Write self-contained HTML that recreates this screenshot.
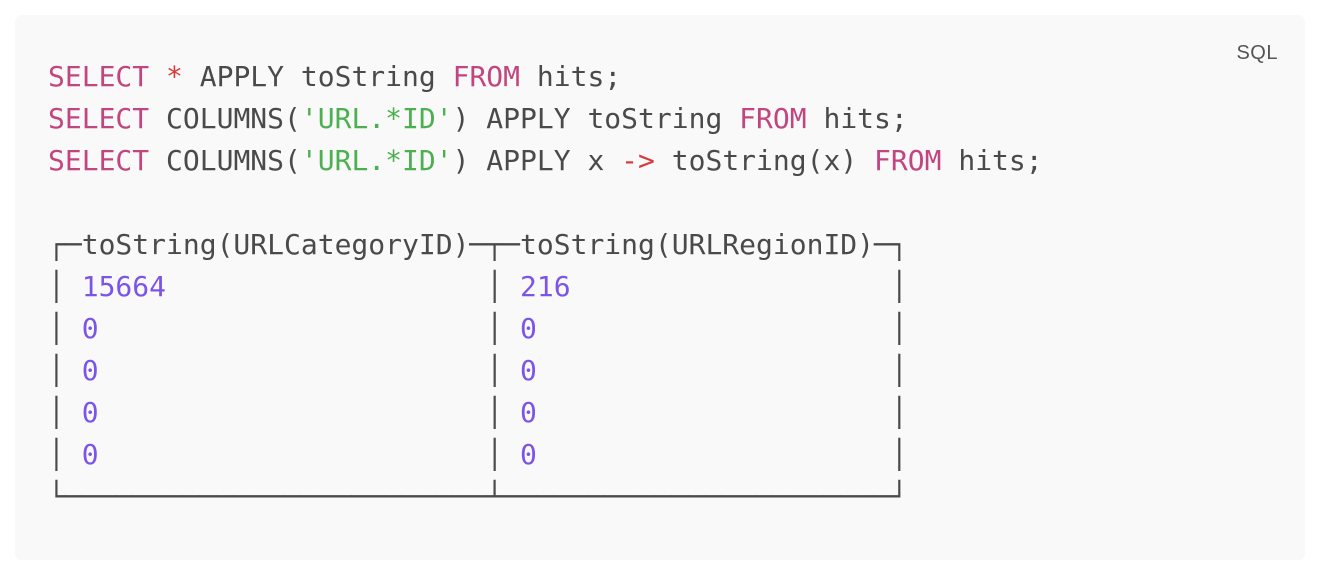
<!DOCTYPE html>
<html><head><meta charset="utf-8"><style>
html,body{margin:0;padding:0;background:#fff;width:1324px;height:580px;overflow:hidden}
.panel{position:absolute;left:15px;top:15px;width:1290px;height:545px;background:#f9f9f9;border-radius:7px}
.lang{position:absolute;right:27px;top:27px;font:20px "Liberation Sans",sans-serif;color:#555;letter-spacing:0.5px}
pre{position:absolute;left:33px;top:41px;margin:0;font-family:"DejaVu Sans Mono","Liberation Mono",monospace;font-size:28px;line-height:42px;color:#4a4a4a}
.k{color:#c2457f}.o{color:#d73a3a}.s{color:#4cb050}.n{color:#7b55e8}
</style></head><body>
<div class="panel"><div class="lang">SQL</div>
<pre><span class="k">SELECT</span> <span class="o">*</span> APPLY toString <span class="k">FROM</span> hits;
<span class="k">SELECT</span> COLUMNS(<span class="s">'URL.*ID'</span>) APPLY toString <span class="k">FROM</span> hits;
<span class="k">SELECT</span> COLUMNS(<span class="s">'URL.*ID'</span>) APPLY x <span class="o">-&gt;</span> toString(x) <span class="k">FROM</span> hits;

┌─toString(URLCategoryID)─┬─toString(URLRegionID)─┐
│ <span class="n">15664</span>                   │ <span class="n">216</span>                   │
│ <span class="n">0</span>                       │ <span class="n">0</span>                     │
│ <span class="n">0</span>                       │ <span class="n">0</span>                     │
│ <span class="n">0</span>                       │ <span class="n">0</span>                     │
│ <span class="n">0</span>                       │ <span class="n">0</span>                     │
└─────────────────────────┴───────────────────────┘</pre>
</div>
</body></html>
